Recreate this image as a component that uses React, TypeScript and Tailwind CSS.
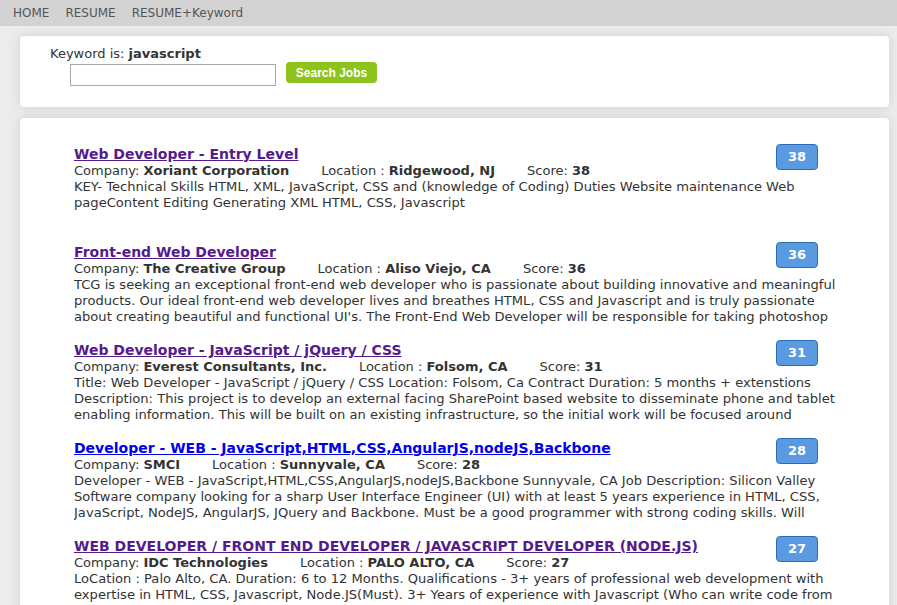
import React from "react";

type Job = {
  title: string;
  visited: boolean;
  company: string;
  location: string;
  score: number;
  lines: string[];
};

const jobs: Job[] = [
  {
    title: "Web Developer - Entry Level",
    visited: true,
    company: "Xoriant Corporation",
    location: "Ridgewood, NJ",
    score: 38,
    lines: [
      "KEY- Technical Skills HTML, XML, JavaScript, CSS and (knowledge of Coding) Duties Website maintenance Web",
      "pageContent Editing Generating XML HTML, CSS, Javascript",
    ],
  },
  {
    title: "Front-end Web Developer",
    visited: true,
    company: "The Creative Group",
    location: "Aliso Viejo, CA",
    score: 36,
    lines: [
      "TCG is seeking an exceptional front-end web developer who is passionate about building innovative and meaningful",
      "products. Our ideal front-end web developer lives and breathes HTML, CSS and Javascript and is truly passionate",
      "about creating beautiful and functional UI's. The Front-End Web Developer will be responsible for taking photoshop",
    ],
  },
  {
    title: "Web Developer - JavaScript / jQuery / CSS",
    visited: true,
    company: "Everest Consultants, Inc.",
    location: "Folsom, CA",
    score: 31,
    lines: [
      "Title: Web Developer - JavaScript / jQuery / CSS Location: Folsom, Ca Contract Duration: 5 months + extenstions",
      "Description: This project is to develop an external facing SharePoint based website to disseminate phone and tablet",
      "enabling information. This will be built on an existing infrastructure, so the initial work will be focused around",
    ],
  },
  {
    title: "Developer - WEB - JavaScript,HTML,CSS,AngularJS,nodeJS,Backbone",
    visited: false,
    company: "SMCI",
    location: "Sunnyvale, CA",
    score: 28,
    lines: [
      "Developer - WEB - JavaScript,HTML,CSS,AngularJS,nodeJS,Backbone Sunnyvale, CA Job Description: Silicon Valley",
      "Software company looking for a sharp User Interface Engineer (UI) with at least 5 years experience in HTML, CSS,",
      "JavaScript, NodeJS, AngularJS, JQuery and Backbone. Must be a good programmer with strong coding skills. Will",
    ],
  },
  {
    title: "WEB DEVELOPER / FRONT END DEVELOPER / JAVASCRIPT DEVELOPER (NODE.JS)",
    visited: true,
    company: "IDC Technologies",
    location: "PALO ALTO, CA",
    score: 27,
    lines: [
      "LoCation : Palo Alto, CA. Duration: 6 to 12 Months. Qualifications - 3+ years of professional web development with",
      "expertise in HTML, CSS, Javascript, Node.JS(Must). 3+ Years of experience with Javascript (Who can write code from",
    ],
  },
];

function JobItem({ job }: { job: Job }) {
  return (
    <div className="relative h-[98px]">
      <div className="absolute right-[51px] top-[-1px] flex h-[26px] w-[42px] items-center justify-center rounded-[4px] border border-[#2d6db5] bg-[#5a9ae0] text-[13px] font-bold text-white">
        {job.score}
      </div>
      <a
        href="#"
        className={`block whitespace-nowrap text-[14px] leading-[18px] font-bold underline ${
          job.visited ? "text-[#551a8b]" : "text-[#0000ee]"
        }`}
      >
        {job.title}
      </a>
      <div className="whitespace-nowrap text-[13px] leading-[16px] text-[#333]">
        <span className="mr-[32px]">
          Company: <b>{job.company}</b>
        </span>
        <span className="mr-[32px]">
          Location : <b>{job.location}</b>
        </span>
        <span>
          Score: <b>{job.score}</b>
        </span>
      </div>
      <div className="h-[48px] overflow-hidden text-[13.1px] leading-[16px] text-[#333]">
        {job.lines.map((l, i) => (
          <div key={i} className="whitespace-nowrap">
            {l}
          </div>
        ))}
      </div>
    </div>
  );
}

export default function App() {
  return (
    <div
      className="h-[605px] overflow-hidden bg-[#ececec]"
      style={{ fontFamily: '"DejaVu Sans", Verdana, sans-serif' }}
    >
      <nav className="flex h-[26px] items-center gap-[16px] bg-[#d3d3d3] pl-[13px] text-[12px] text-[#555]">
        <span>HOME</span>
        <span>RESUME</span>
        <span>RESUME+Keyword</span>
      </nav>
      <div className="pl-[20px] pr-[8px] pt-[10px]">
        <div className="h-[71px] rounded-[4px] bg-white pl-[30px] pt-[10px] shadow-[0_0_12px_rgba(0,0,0,0.12)]">
          <div className="text-[13px] leading-[16px] text-[#333]">
            Keyword is: <b>javascript</b>
          </div>
          <div className="flex items-start">
            <input
              type="text"
              className="ml-[20px] mt-[2px] h-[22px] w-[206px] border border-[#a9a9a9] bg-white"
            />
            <button
              className="ml-[10px] flex h-[21px] w-[91px] items-center justify-center rounded-[4px] bg-[#8dc31a] text-[12px] font-bold text-white"
              style={{ fontFamily: '"Liberation Sans", Arial, sans-serif' }}
            >
              Search Jobs
            </button>
          </div>
        </div>
        <div className="mt-[11px] h-[600px] rounded-[4px] bg-white pl-[54px] pr-[20px] pt-[27px] shadow-[0_0_12px_rgba(0,0,0,0.12)]">
          {jobs.map((j, i) => (
            <JobItem key={i} job={j} />
          ))}
        </div>
      </div>
    </div>
  );
}
